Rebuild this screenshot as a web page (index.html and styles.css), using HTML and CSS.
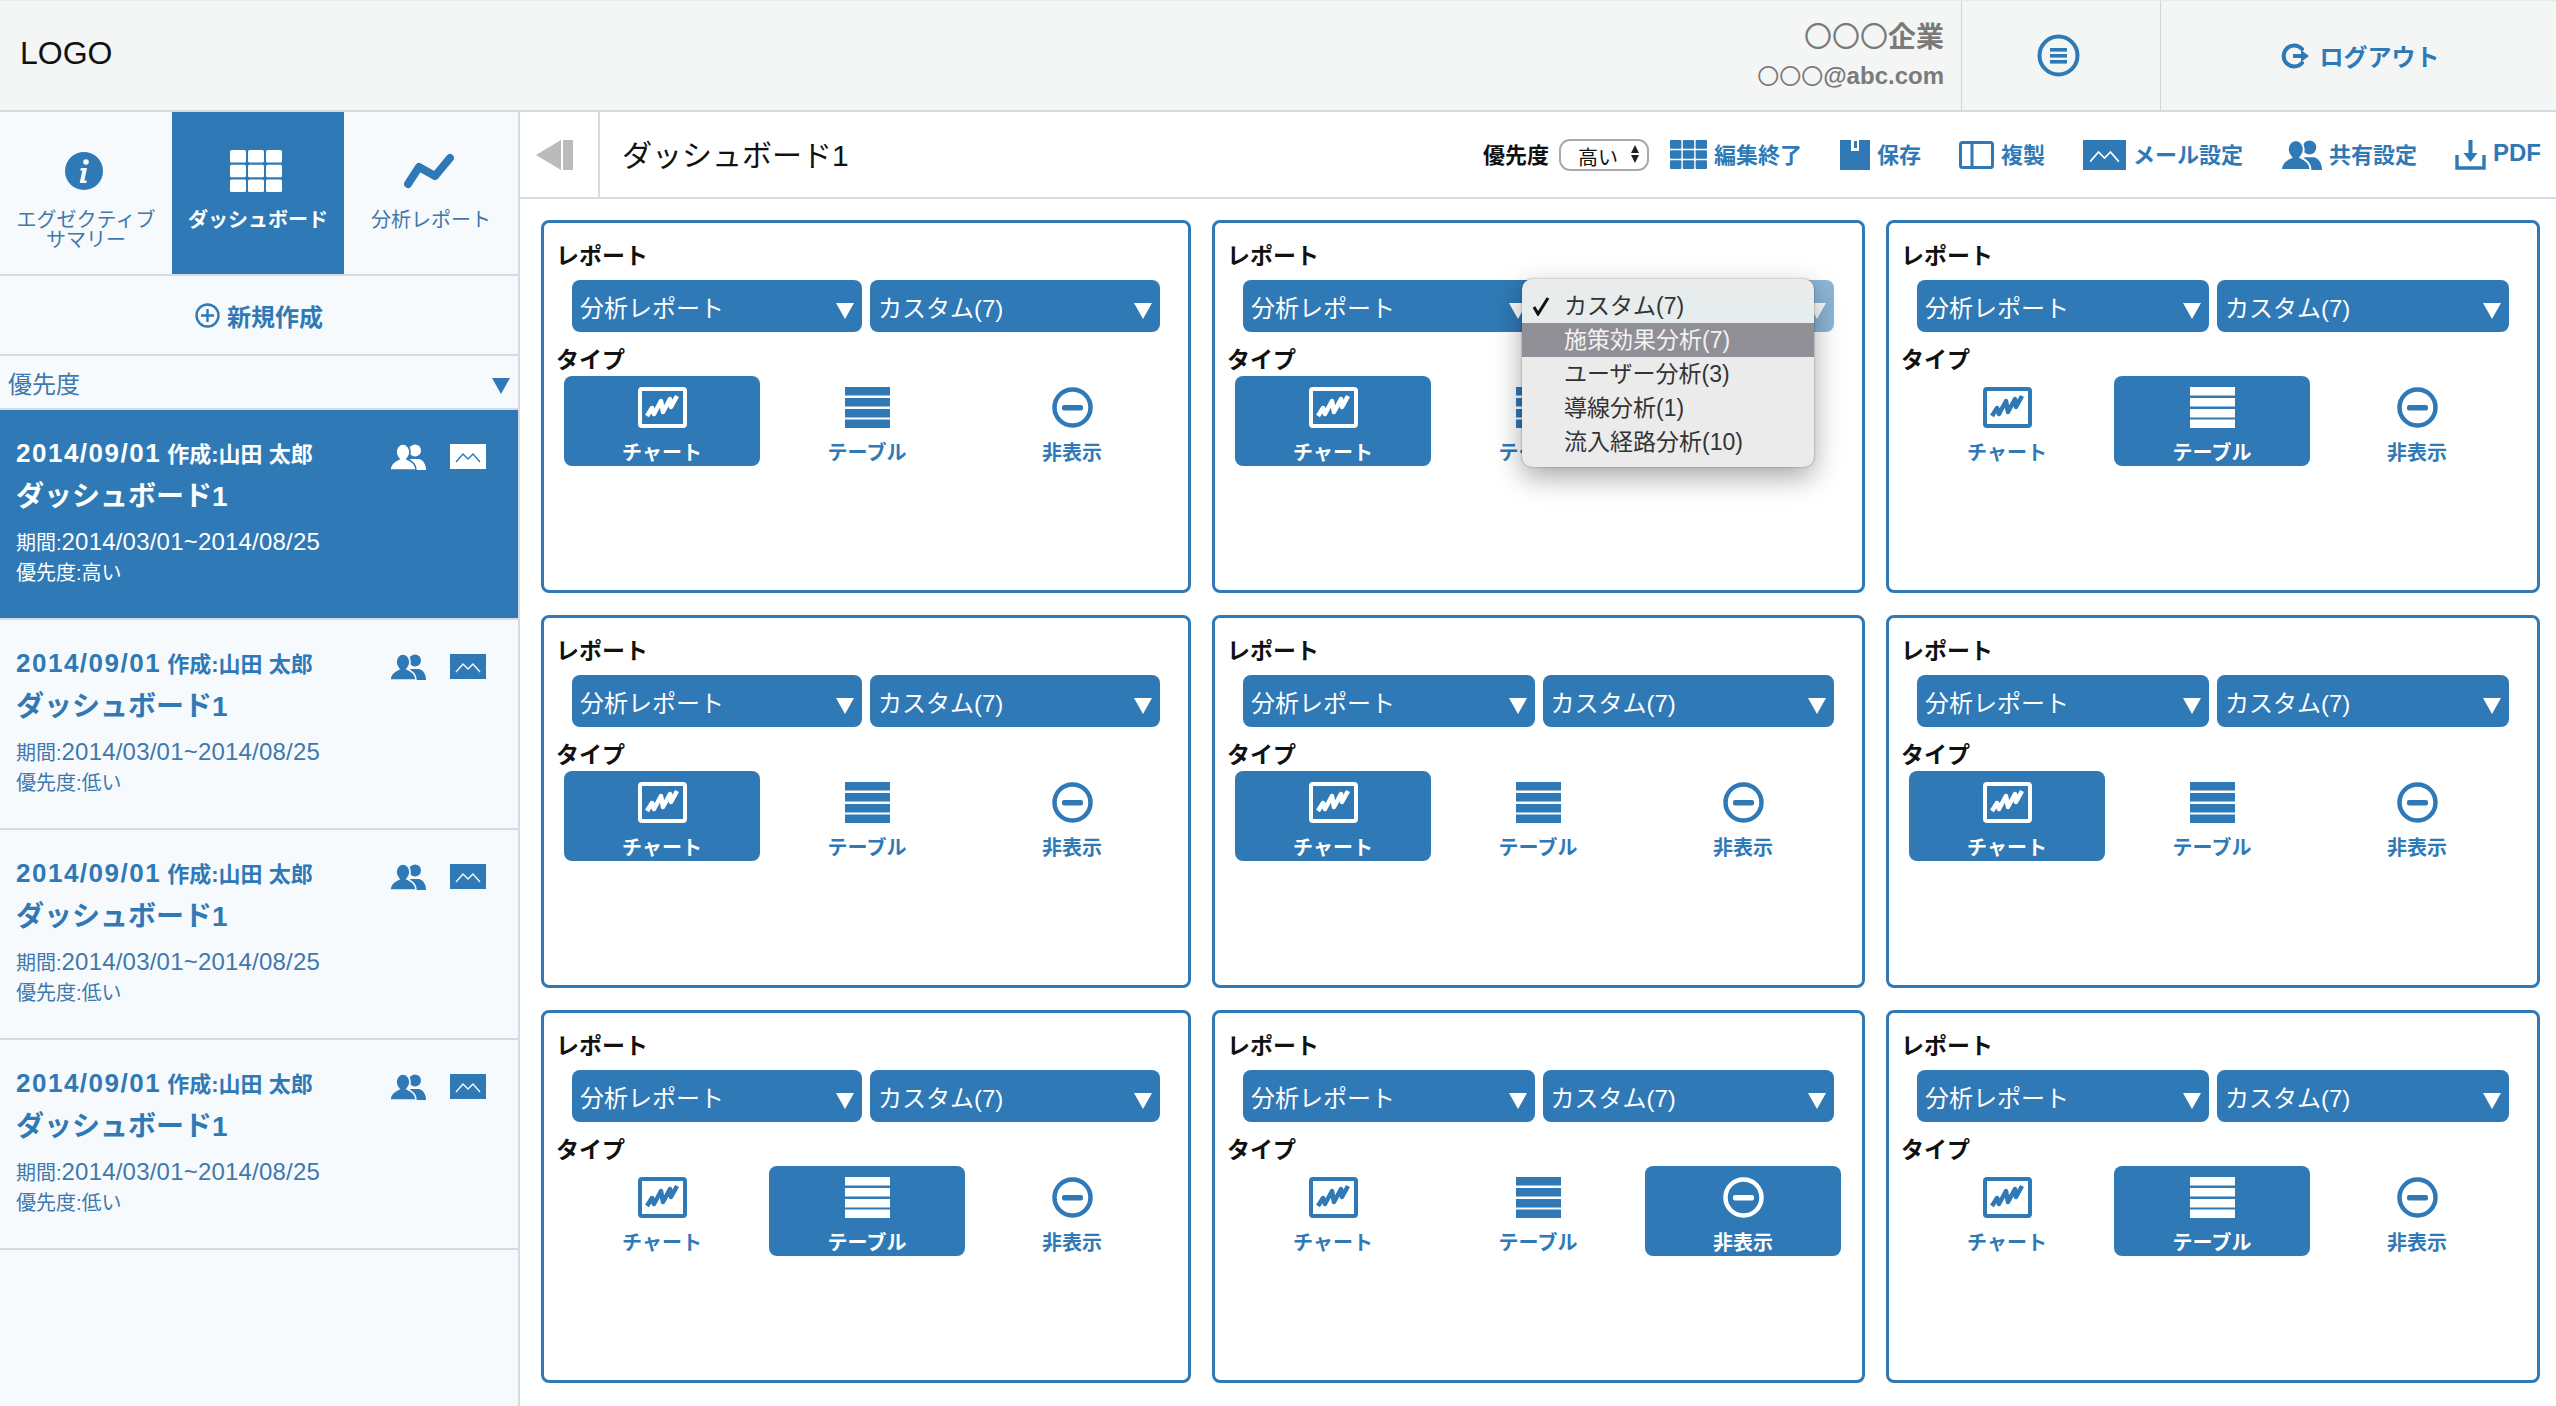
FILE: index.html
```html
<!DOCTYPE html>
<html lang="ja">

<head>
    <meta charset="UTF-8">
    <title>ダッシュボード</title>
    <link rel="stylesheet" href="styles.css">
</head>

<body>
    <svg class="defs" width="0" height="0">
        <symbol id="i-chart" viewBox="0 0 49 41">
            <rect x="2" y="2" width="45" height="37" rx="2" fill="none" stroke="currentColor" stroke-width="4" />
            <path d="M9 29l5-8 2 6 7-13 2 11 7-13 1 8 6-11" fill="none" stroke="currentColor" stroke-width="4.5" stroke-linejoin="round" />
        </symbol>
        <symbol id="i-table" viewBox="0 0 45 41">
            <rect width="45" height="8.5" fill="currentColor" />
            <rect y="11" width="45" height="8.5" fill="currentColor" />
            <rect y="22" width="45" height="8.5" fill="currentColor" />
            <rect y="32.5" width="45" height="8.5" fill="currentColor" />
        </symbol>
        <symbol id="i-hide" viewBox="0 0 41 41">
            <circle cx="20.5" cy="20.5" r="18" fill="none" stroke="currentColor" stroke-width="4.5" />
            <rect x="10" y="18" width="21" height="5.5" rx="2" fill="currentColor" />
        </symbol>
        <symbol id="i-people" viewBox="0 0 36 26">
            <circle cx="25" cy="6.5" r="6" fill="currentColor" />
            <path d="M15 26c0-6 3-10 6-11h8c4 1 7 5 7 11z" fill="currentColor" />
            <path class="cut" d="M0 26c0-6 4-9 9-11-2-2-3-4-3-7 0-4 3-8 7-8s7 4 7 8c0 3-1 5-3 7 5 2 9 5 9 11z" fill="currentColor" />
        </symbol>
        <symbol id="i-mail" viewBox="0 0 36 25">
            <rect width="36" height="25" fill="currentColor" />
            <path class="line" d="M6 18l7-8 5 5 5-5 7 8" fill="none" stroke-width="1.4" />
        </symbol>
        <symbol id="i-grid" viewBox="0 0 52 42">
            <rect width="16" height="12.6" rx="1.5" fill="currentColor" />
            <rect x="18" width="16" height="12.6" rx="1.5" fill="currentColor" />
            <rect x="36" width="16" height="12.6" rx="1.5" fill="currentColor" />
            <rect y="14.7" width="16" height="12.6" rx="1.5" fill="currentColor" />
            <rect x="18" y="14.7" width="16" height="12.6" rx="1.5" fill="currentColor" />
            <rect x="36" y="14.7" width="16" height="12.6" rx="1.5" fill="currentColor" />
            <rect y="29.4" width="16" height="12.6" rx="1.5" fill="currentColor" />
            <rect x="18" y="29.4" width="16" height="12.6" rx="1.5" fill="currentColor" />
            <rect x="36" y="29.4" width="16" height="12.6" rx="1.5" fill="currentColor" />
        </symbol>
    </svg>

    <header class="header">
        <div class="logo">LOGO</div>
        <div class="company">
            <p class="company-name"><span class="circles">〇〇〇</span>企業</p>
            <p class="company-mail"><span class="circles">〇〇〇</span>@abc.com</p>
        </div>
        <div class="menu-cell">
            <svg width="43" height="43" viewBox="0 0 43 43">
                <circle cx="21.5" cy="21.5" r="19" fill="none" stroke="currentColor" stroke-width="4" />
                <rect x="13" y="14" width="17" height="3.6" fill="currentColor" />
                <rect x="13" y="20" width="17" height="3.6" fill="currentColor" />
                <rect x="13" y="26" width="17" height="3.6" fill="currentColor" />
            </svg>
        </div>
        <div class="logout-cell">
            <svg width="29" height="26" viewBox="0 0 29 26">
                <path d="M21 6a10.5 10.5 0 1 0 0 14" fill="none" stroke="currentColor" stroke-width="4" stroke-linecap="round" />
                <path d="M12 11h8V7l8 6-8 6v-4h-8z" fill="currentColor" />
            </svg>
            <span>ログアウト</span>
        </div>
    </header>

    <div class="main">
        <aside class="sidebar">
            <nav class="tabs">
                <div class="tab">
                    <div class="tab-icon">
                        <svg width="38" height="38" viewBox="0 0 38 38">
                            <circle cx="19" cy="19" r="19" fill="currentColor" />
                            <circle cx="21" cy="10" r="2.8" fill="#f7fafc" />
                            <path d="M16 16h6l-2.6 12.5h2.4l-.5 2.5h-6.6l2.6-12.5H15z" fill="#f7fafc" />
                        </svg>
                    </div>
                    <div class="tab-label">エグゼクティブ<br>サマリー</div>
                </div>
                <div class="tab tab-active">
                    <div class="tab-icon">
                        <svg width="52" height="42"><use href="#i-grid" /></svg>
                    </div>
                    <div class="tab-label">ダッシュボード</div>
                </div>
                <div class="tab">
                    <div class="tab-icon">
                        <svg width="50" height="36" viewBox="0 0 50 36">
                            <path d="M4 31L15 14l16 9L46 5" fill="none" stroke="currentColor" stroke-width="8" stroke-linecap="round" stroke-linejoin="round" />
                        </svg>
                    </div>
                    <div class="tab-label">分析レポート</div>
                </div>
            </nav>

            <div class="new-row">
                <svg width="25" height="25" viewBox="0 0 25 25">
                    <circle cx="12.5" cy="12.5" r="11" fill="none" stroke="currentColor" stroke-width="2.4" />
                    <path d="M12.5 6v13M6 12.5h13" stroke="currentColor" stroke-width="2.4" />
                </svg>
                <span>新規作成</span>
            </div>

            <div class="filter-row">
                <span>優先度</span>
                <i class="tri tri-blue"></i>
            </div>

            <div class="item item-active">
                <div class="item-head">
                    <p class="item-date"><span class="date">2014/09/01</span> 作成:山田 太郎</p>
                    <div class="item-icons">
                        <svg width="36" height="26"><use href="#i-people" /></svg>
                        <svg width="36" height="25"><use href="#i-mail" /></svg>
                    </div>
                </div>
                <h3 class="item-title">ダッシュボード1</h3>
                <p class="item-text item-period">期間:<span class="num">2014/03/01~2014/08/25</span></p>
                <p class="item-text">優先度:高い</p>
            </div>
            <div class="item">
                <div class="item-head">
                    <p class="item-date"><span class="date">2014/09/01</span> 作成:山田 太郎</p>
                    <div class="item-icons">
                        <svg width="36" height="26"><use href="#i-people" /></svg>
                        <svg width="36" height="25"><use href="#i-mail" /></svg>
                    </div>
                </div>
                <h3 class="item-title">ダッシュボード1</h3>
                <p class="item-text item-period">期間:<span class="num">2014/03/01~2014/08/25</span></p>
                <p class="item-text">優先度:低い</p>
            </div>
            <div class="item">
                <div class="item-head">
                    <p class="item-date"><span class="date">2014/09/01</span> 作成:山田 太郎</p>
                    <div class="item-icons">
                        <svg width="36" height="26"><use href="#i-people" /></svg>
                        <svg width="36" height="25"><use href="#i-mail" /></svg>
                    </div>
                </div>
                <h3 class="item-title">ダッシュボード1</h3>
                <p class="item-text item-period">期間:<span class="num">2014/03/01~2014/08/25</span></p>
                <p class="item-text">優先度:低い</p>
            </div>
            <div class="item">
                <div class="item-head">
                    <p class="item-date"><span class="date">2014/09/01</span> 作成:山田 太郎</p>
                    <div class="item-icons">
                        <svg width="36" height="26"><use href="#i-people" /></svg>
                        <svg width="36" height="25"><use href="#i-mail" /></svg>
                    </div>
                </div>
                <h3 class="item-title">ダッシュボード1</h3>
                <p class="item-text item-period">期間:<span class="num">2014/03/01~2014/08/25</span></p>
                <p class="item-text">優先度:低い</p>
            </div>
        </aside>

        <main class="content">
            <div class="toolbar">
                <div class="back-cell">
                    <svg width="38" height="30" viewBox="0 0 38 30">
                        <path d="M25 0v30L0 15z" fill="#bbb" />
                        <rect x="27" width="10" height="30" fill="#bbb" />
                    </svg>
                </div>
                <h1 class="page-title">ダッシュボード1</h1>
                <div class="actions">
                    <div class="priority">
                        <span>優先度</span>
                        <div class="mini-select">
                            <span>高い</span>
                            <div class="updown"><i></i><i></i></div>
                        </div>
                    </div>
                    <div class="action">
                        <svg width="37" height="29" preserveAspectRatio="none" viewBox="0 0 52 42"><use href="#i-grid" width="52" height="42" /></svg>
                        <span>編集終了</span>
                    </div>
                    <div class="action">
                        <svg width="30" height="30" viewBox="0 0 30 30">
                            <path d="M0 0h11v11h8V0h11v30H0z" fill="currentColor" />
                            <rect x="14" y="1" width="3" height="7" fill="currentColor" />
                        </svg>
                        <span>保存</span>
                    </div>
                    <div class="action">
                        <svg width="35" height="30" viewBox="0 0 35 30">
                            <rect x="1.5" y="2.5" width="32" height="25" rx="2" fill="none" stroke="currentColor" stroke-width="3" />
                            <path d="M13 1v28" stroke="currentColor" stroke-width="3" />
                        </svg>
                        <span>複製</span>
                    </div>
                    <div class="action action-mail">
                        <svg width="43" height="30" preserveAspectRatio="none" viewBox="0 0 36 25"><use href="#i-mail" width="36" height="25" /></svg>
                        <span>メール設定</span>
                    </div>
                    <div class="action">
                        <svg width="41" height="30" preserveAspectRatio="none" viewBox="0 0 36 26"><use href="#i-people" width="36" height="26" /></svg>
                        <span>共有設定</span>
                    </div>
                    <div class="action">
                        <svg width="31" height="30" viewBox="0 0 31 30">
                            <path d="M2 15v13h27V15" fill="none" stroke="currentColor" stroke-width="3.4" />
                            <path d="M13.5 0h4v13h5l-7 9-7-9h5z" fill="currentColor" />
                        </svg>
                        <span>PDF</span>
                    </div>
                </div>
            </div>

            <div class="cards">
                <section class="card">
                    <h4 class="card-label">レポート</h4>
                    <div class="selects">
                        <div class="select">分析レポート<i class="tri"></i></div>
                        <div class="select">カスタム(7)<i class="tri"></i></div>
                    </div>
                    <h4 class="card-label card-label-type">タイプ</h4>
                    <div class="types">
                        <div class="type type-on"><svg width="49" height="41"><use href="#i-chart" /></svg><span>チャート</span></div>
                        <div class="type"><svg width="45" height="41"><use href="#i-table" /></svg><span>テーブル</span></div>
                        <div class="type"><svg width="41" height="41"><use href="#i-hide" /></svg><span>非表示</span></div>
                    </div>
                </section>

                <section class="card">
                    <h4 class="card-label">レポート</h4>
                    <div class="selects">
                        <div class="select">分析レポート<i class="tri"></i></div>
                        <div class="select select-dim">カスタム(7)<i class="tri"></i></div>
                    </div>
                    <h4 class="card-label card-label-type">タイプ</h4>
                    <div class="types">
                        <div class="type type-on"><svg width="49" height="41"><use href="#i-chart" /></svg><span>チャート</span></div>
                        <div class="type"><svg width="45" height="41"><use href="#i-table" /></svg><span>テーブル</span></div>
                        <div class="type"><svg width="41" height="41"><use href="#i-hide" /></svg><span>非表示</span></div>
                    </div>
                    <ul class="popup">
                        <li class="popup-first">
                            <svg class="check" width="18" height="20" viewBox="0 0 18 20">
                                <path d="M2 11l4 7L16 2" fill="none" stroke="#111" stroke-width="3" />
                            </svg>
                            カスタム(7)
                        </li>
                        <li class="popup-hover">施策効果分析(7)</li>
                        <li>ユーザー分析(3)</li>
                        <li>導線分析(1)</li>
                        <li>流入経路分析(10)</li>
                    </ul>
                </section>

                <section class="card">
                    <h4 class="card-label">レポート</h4>
                    <div class="selects">
                        <div class="select">分析レポート<i class="tri"></i></div>
                        <div class="select">カスタム(7)<i class="tri"></i></div>
                    </div>
                    <h4 class="card-label card-label-type">タイプ</h4>
                    <div class="types">
                        <div class="type"><svg width="49" height="41"><use href="#i-chart" /></svg><span>チャート</span></div>
                        <div class="type type-on"><svg width="45" height="41"><use href="#i-table" /></svg><span>テーブル</span></div>
                        <div class="type"><svg width="41" height="41"><use href="#i-hide" /></svg><span>非表示</span></div>
                    </div>
                </section>

                <section class="card">
                    <h4 class="card-label">レポート</h4>
                    <div class="selects">
                        <div class="select">分析レポート<i class="tri"></i></div>
                        <div class="select">カスタム(7)<i class="tri"></i></div>
                    </div>
                    <h4 class="card-label card-label-type">タイプ</h4>
                    <div class="types">
                        <div class="type type-on"><svg width="49" height="41"><use href="#i-chart" /></svg><span>チャート</span></div>
                        <div class="type"><svg width="45" height="41"><use href="#i-table" /></svg><span>テーブル</span></div>
                        <div class="type"><svg width="41" height="41"><use href="#i-hide" /></svg><span>非表示</span></div>
                    </div>
                </section>

                <section class="card">
                    <h4 class="card-label">レポート</h4>
                    <div class="selects">
                        <div class="select">分析レポート<i class="tri"></i></div>
                        <div class="select">カスタム(7)<i class="tri"></i></div>
                    </div>
                    <h4 class="card-label card-label-type">タイプ</h4>
                    <div class="types">
                        <div class="type type-on"><svg width="49" height="41"><use href="#i-chart" /></svg><span>チャート</span></div>
                        <div class="type"><svg width="45" height="41"><use href="#i-table" /></svg><span>テーブル</span></div>
                        <div class="type"><svg width="41" height="41"><use href="#i-hide" /></svg><span>非表示</span></div>
                    </div>
                </section>

                <section class="card">
                    <h4 class="card-label">レポート</h4>
                    <div class="selects">
                        <div class="select">分析レポート<i class="tri"></i></div>
                        <div class="select">カスタム(7)<i class="tri"></i></div>
                    </div>
                    <h4 class="card-label card-label-type">タイプ</h4>
                    <div class="types">
                        <div class="type type-on"><svg width="49" height="41"><use href="#i-chart" /></svg><span>チャート</span></div>
                        <div class="type"><svg width="45" height="41"><use href="#i-table" /></svg><span>テーブル</span></div>
                        <div class="type"><svg width="41" height="41"><use href="#i-hide" /></svg><span>非表示</span></div>
                    </div>
                </section>

                <section class="card">
                    <h4 class="card-label">レポート</h4>
                    <div class="selects">
                        <div class="select">分析レポート<i class="tri"></i></div>
                        <div class="select">カスタム(7)<i class="tri"></i></div>
                    </div>
                    <h4 class="card-label card-label-type">タイプ</h4>
                    <div class="types">
                        <div class="type"><svg width="49" height="41"><use href="#i-chart" /></svg><span>チャート</span></div>
                        <div class="type type-on"><svg width="45" height="41"><use href="#i-table" /></svg><span>テーブル</span></div>
                        <div class="type"><svg width="41" height="41"><use href="#i-hide" /></svg><span>非表示</span></div>
                    </div>
                </section>

                <section class="card">
                    <h4 class="card-label">レポート</h4>
                    <div class="selects">
                        <div class="select">分析レポート<i class="tri"></i></div>
                        <div class="select">カスタム(7)<i class="tri"></i></div>
                    </div>
                    <h4 class="card-label card-label-type">タイプ</h4>
                    <div class="types">
                        <div class="type"><svg width="49" height="41"><use href="#i-chart" /></svg><span>チャート</span></div>
                        <div class="type"><svg width="45" height="41"><use href="#i-table" /></svg><span>テーブル</span></div>
                        <div class="type type-on"><svg width="41" height="41"><use href="#i-hide" /></svg><span>非表示</span></div>
                    </div>
                </section>

                <section class="card">
                    <h4 class="card-label">レポート</h4>
                    <div class="selects">
                        <div class="select">分析レポート<i class="tri"></i></div>
                        <div class="select">カスタム(7)<i class="tri"></i></div>
                    </div>
                    <h4 class="card-label card-label-type">タイプ</h4>
                    <div class="types">
                        <div class="type"><svg width="49" height="41"><use href="#i-chart" /></svg><span>チャート</span></div>
                        <div class="type type-on"><svg width="45" height="41"><use href="#i-table" /></svg><span>テーブル</span></div>
                        <div class="type"><svg width="41" height="41"><use href="#i-hide" /></svg><span>非表示</span></div>
                    </div>
                </section>
            </div>
        </main>
    </div>
</body>

</html>
```

FILE: styles.css
```css
* {
    padding: 0;
    margin: 0;
    box-sizing: border-box;
}

html,
body {
    height: 100%;
    overflow: hidden;
}

body {
    display: flex;
    flex-direction: column;
    background: #fff;
    color: #111;
    font-family: "Liberation Sans", "Noto Sans CJK JP", sans-serif;
    --blue: #2f79b6;
    --cut: #f7fafc;
    --line: #d5dbe0;
}

.defs {
    position: absolute;
}

.tri {
    display: block;
    width: 0;
    height: 0;
    border-left: 9px solid transparent;
    border-right: 9px solid transparent;
    border-top: 16px solid #fff;
}

.tri-blue {
    margin-top: 7px;
    border-top-color: var(--blue);
}

/* header */
.header {
    display: flex;
    flex: none;
    height: 112px;
    background: #f4f6f6;
    border-top: 1px solid #e8ebec;
    border-bottom: 2px solid var(--line);
}

.logo {
    flex: 1;
    padding-left: 20px;
    font-size: 32px;
    line-height: 105px;
}

.company {
    padding: 18px 17px 0 0;
    color: #7a7a7a;
    text-align: right;
    font-weight: 700;
}

.company-name {
    font-size: 28px;
    line-height: 38px;
}

.company-mail {
    font-size: 24px;
    line-height: 38px;
}

.circles {
    font-weight: 400;
}

.company-mail .circles {
    font-size: 22px;
}

.menu-cell {
    display: flex;
    align-items: center;
    justify-content: center;
    width: 200px;
    padding-right: 6px;
    border-left: 1px solid #d0d4d6;
    border-right: 1px solid #d0d4d6;
    color: var(--blue);
}

.logout-cell {
    display: flex;
    align-items: center;
    justify-content: center;
    gap: 10px;
    width: 395px;
    padding-left: 3px;
    color: var(--blue);
    font-size: 24px;
    font-weight: 700;
}

/* sidebar */
.main {
    display: flex;
    flex: 1;
    min-height: 0;
}

.sidebar {
    flex: none;
    width: 520px;
    background: #f7fafc;
    border-right: 2px solid var(--line);
    color: var(--blue);
}

.tabs {
    display: flex;
    height: 164px;
    border-bottom: 2px solid var(--line);
}

.tab {
    width: 172px;
    padding-top: 37px;
    text-align: center;
}

.tab:last-child {
    width: 174px;
}

.tab-active {
    background: var(--blue);
    color: #fff;
}

.tab-icon {
    display: flex;
    align-items: center;
    justify-content: center;
    height: 44px;
    margin-bottom: 17px;
    padding-right: 5px;
}

.tab-label {
    font-size: 20px;
    line-height: 20px;
    color: #3f78ad;
}

.tab-active .tab-label {
    color: #fff;
    font-weight: 700;
}

.new-row {
    display: flex;
    align-items: center;
    justify-content: center;
    gap: 7px;
    height: 80px;
    border-bottom: 2px solid var(--line);
    font-size: 24px;
    font-weight: 700;
}

.filter-row {
    display: flex;
    align-items: center;
    justify-content: space-between;
    height: 54px;
    padding: 0 8px;
    border-bottom: 2px solid var(--line);
    color: #3f78ad;
    font-size: 24px;
}

.item {
    height: 210px;
    padding: 28px 0 0 16px;
    border-bottom: 2px solid var(--line);
}

.item-active {
    background: var(--blue);
    color: #fff;
    --cut: #2f79b6;
}

.item-head {
    display: flex;
    align-items: flex-start;
}

.item-date {
    font-size: 22px;
    font-weight: 700;
    line-height: 30px;
}

.date {
    font-size: 26px;
    letter-spacing: 1.5px;
}

.item-icons {
    display: flex;
    gap: 24px;
    margin: 6px 32px 0 auto;
}

.line {
    stroke: var(--cut);
}

.cut {
    stroke: var(--cut);
    stroke-width: 1.6;
}

.item-title {
    margin-top: 7px;
    font-size: 28px;
    line-height: 40px;
}

.item-text {
    color: #3f78ad;
    font-size: 20px;
    line-height: 30px;
}

.item-active .item-text {
    color: #fff;
}

.item-period {
    margin-top: 10px;
}

.num {
    font-size: 24px;
    letter-spacing: .2px;
}

/* toolbar */
.content {
    flex: 1;
    min-width: 0;
}

.toolbar {
    display: flex;
    align-items: center;
    height: 87px;
    border-bottom: 2px solid var(--line);
    --cut: #fff;
}

.back-cell {
    display: flex;
    align-items: center;
    align-self: stretch;
    width: 80px;
    padding-left: 16px;
    border-right: 2px solid var(--line);
}

.page-title {
    margin-bottom: 3px;
    padding-left: 22px;
    font-size: 30px;
    font-weight: 400;
}

.actions {
    display: flex;
    align-items: center;
    gap: 38px;
    margin-left: auto;
    padding-right: 15px;
}

.priority {
    display: flex;
    align-items: center;
    gap: 10px;
    margin-right: -17px;
    font-size: 22px;
    font-weight: 700;
}

.priority > span {
    margin-bottom: 3px;
}

.mini-select {
    display: flex;
    align-items: center;
    justify-content: space-between;
    width: 90px;
    height: 32px;
    padding: 6px 8px 0 17px;
    border: 2px solid #aaa;
    border-radius: 11px;
    font-size: 20px;
    font-weight: 400;
    line-height: 20px;
}

.updown {
    margin-top: -6px;
}

.updown i {
    display: block;
    width: 0;
    height: 0;
    margin-bottom: 2px;
    border-left: 4px solid transparent;
    border-right: 4px solid transparent;
    border-bottom: 8px solid #222;
}

.updown i + i {
    border-bottom: 0;
    border-top: 8px solid #222;
}

.action {
    display: flex;
    align-items: center;
    gap: 7px;
    color: var(--blue);
    font-size: 22px;
    font-weight: 700;
}

.action span {
    margin-bottom: 4px;
}

.action:last-child span {
    font-size: 24px;
}

/* cards */
.cards {
    display: grid;
    grid-template-columns: 650px 653px 654px;
    grid-auto-rows: 373px;
    gap: 22px 21px;
    padding: 21px 0 0 21px;
}

.card {
    position: relative;
    padding: 21px 12px 0;
    border: 3px solid var(--blue);
    border-radius: 8px;
}

.card-label {
    font-size: 23px;
    font-weight: 700;
    line-height: 24px;
}

.card-label-type {
    margin-top: 16px;
}

.selects {
    display: flex;
    gap: 8px;
    margin: 12px 16px 0;
}

.select {
    display: flex;
    flex: 1;
    align-items: center;
    justify-content: space-between;
    height: 52px;
    padding: 0 8px;
    border-radius: 8px;
    background: var(--blue);
    color: #fff;
    font-size: 24px;
}

.select .tri {
    margin-top: 10px;
}

.select-dim {
    opacity: .55;
}

.types {
    display: grid;
    grid-template-columns: repeat(3, 196px);
    gap: 9px;
    margin: 4px 0 0 8px;
}

.type {
    display: flex;
    flex-direction: column;
    align-items: center;
    gap: 13px;
    height: 90px;
    padding-top: 11px;
    border-radius: 8px;
    color: var(--blue);
    font-size: 20px;
    font-weight: 700;
    line-height: 24px;
    --cut: #fff;
}

.type-on {
    background: var(--blue);
    color: #fff;
}

/* open select menu */
.popup {
    position: absolute;
    top: 56px;
    left: 307px;
    width: 292px;
    height: 188px;
    padding-top: 10px;
    border-radius: 10px;
    background: #ebebeb;
    box-shadow: 0 10px 28px rgba(0, 0, 0, .35), 0 0 2px rgba(0, 0, 0, .4);
    color: #333;
    font-size: 23px;
    line-height: 34px;
    list-style: none;
}

.popup li {
    position: relative;
    height: 34px;
    padding-left: 42px;
}

.popup-first {
    background: #e7ecec;
}

.popup-hover {
    background: #918f96;
    color: #f2f2f2;
}

.check {
    position: absolute;
    top: 7px;
    left: 10px;
}
```
